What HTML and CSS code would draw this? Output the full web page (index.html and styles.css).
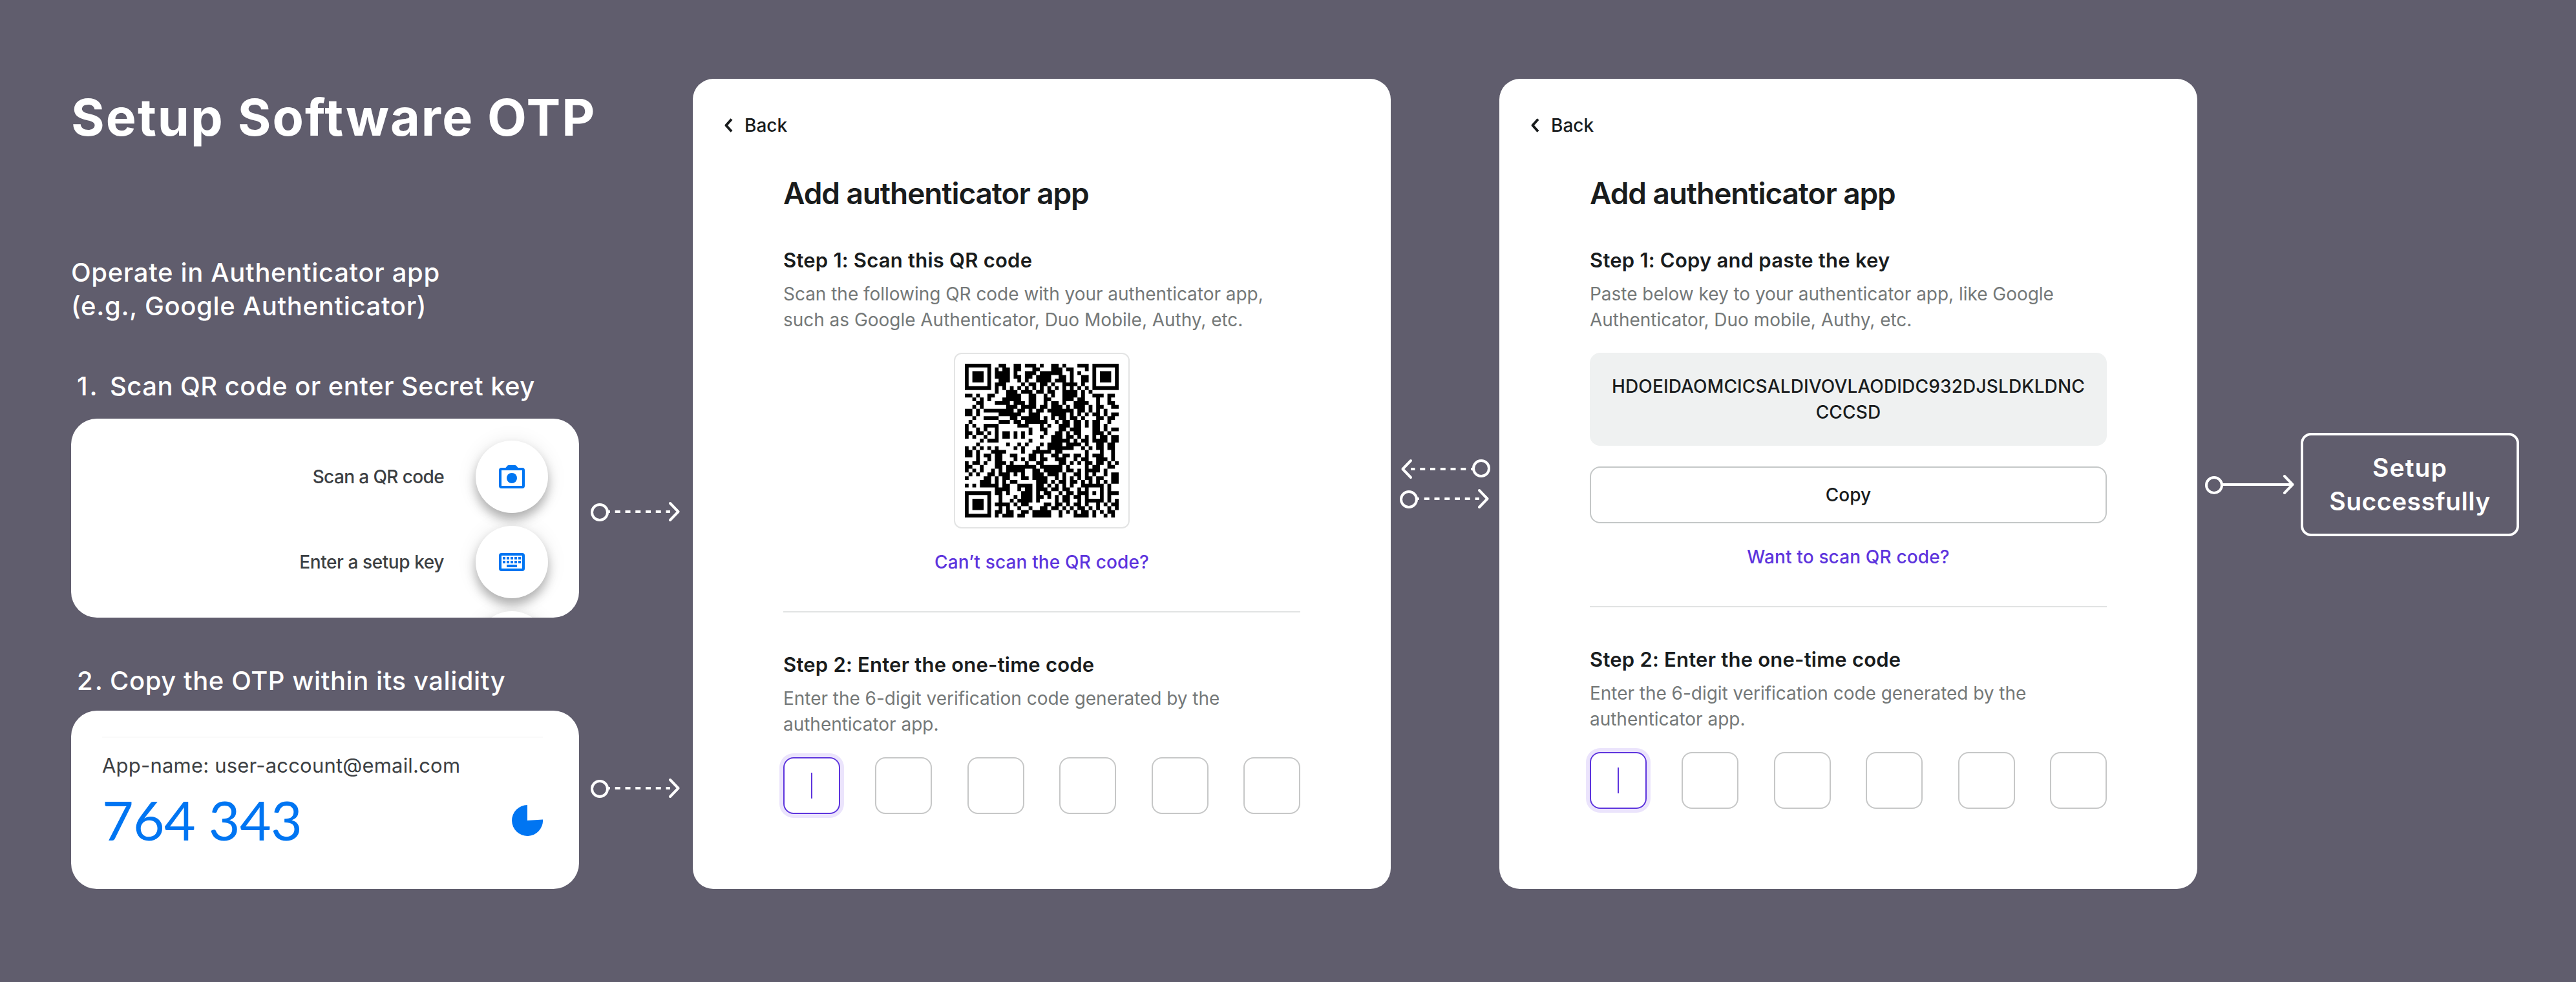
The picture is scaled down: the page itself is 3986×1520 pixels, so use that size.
FILE: index.html
```
<!DOCTYPE html>
<html lang="en">
<head>
<meta charset="utf-8">
<title>Setup Software OTP</title>
<link rel="stylesheet" href="styles.css">
</head>
<body>
<main class="flow">

  <section class="guide">
    <h1 class="guide-title">Setup Software OTP</h1>
    <p class="guide-lead">Operate in Authenticator app<br>(e.g., Google Authenticator)</p>

    <h2 class="guide-step"><span class="num">1.</span><span>Scan QR code or enter Secret key</span></h2>
    <div class="card card-actions">
      <div class="action">
        <span class="action-label">Scan a QR code</span>
        <span class="fab">
          <svg viewBox="0 0 24 24" width="48" height="48" fill="#0075f2"><path fill-rule="evenodd" d="M20 5h-3.2L15.4 3.4A1.2 1.2 0 0 0 14.5 3h-5a1.2 1.2 0 0 0-.9.4L7.2 5H4a2 2 0 0 0-2 2v12a2 2 0 0 0 2 2h16a2 2 0 0 0 2-2V7a2 2 0 0 0-2-2zm0 14H4V7h16v12z"/><circle cx="12" cy="13" r="4"/></svg>
        </span>
      </div>
      <div class="action">
        <span class="action-label action-label-key">Enter a setup key</span>
        <span class="fab">
          <svg viewBox="0 0 24 24" width="48" height="48" fill="#0075f2"><path fill-rule="evenodd" d="M4 5h16a2 2 0 0 1 2 2v10a2 2 0 0 1-2 2H4a2 2 0 0 1-2-2V7a2 2 0 0 1 2-2zm0 2v10h16V7z"/><path d="M5 8h2v2H5zM8 8h2v2H8zM11 8h2v2h-2zM14 8h2v2h-2zM17 8h2v2h-2zM5 11h2v2H5zM8 11h2v2H8zM11 11h2v2h-2zM14 11h2v2h-2zM17 11h2v2h-2zM8 14h8v2H8z"/></svg>
        </span>
      </div>
      <div class="action"><span class="fab"></span></div>
    </div>

    <h2 class="guide-step guide-step-copy"><span class="num">2.</span><span>Copy the OTP within its validity</span></h2>
    <div class="card card-code">
      <p class="account">App-name: user-account@email.com</p>
      <div class="code-row">
        <span class="code">764 343</span>
        <svg width="48" height="48" viewBox="0 0 48 48"><path fill="#0075f2" d="M24 24V0A24 24 0 1 0 48 22.4z"/></svg>
      </div>
    </div>
  </section>

  <div class="links links-guide">
    <svg class="arrow" width="138" height="32" viewBox="0 0 138 32"><circle cx="14" cy="17" r="12"/><path d="M27 16H123" stroke-dasharray="8 7.75" stroke-dashoffset="5"/><path class="tip" d="M123 3l12.500 13L123 29"/></svg>
    <svg class="arrow" width="138" height="32" viewBox="0 0 138 32"><circle cx="14" cy="17" r="12"/><path d="M27 16H123" stroke-dasharray="8 7.75" stroke-dashoffset="5"/><path class="tip" d="M123 3l12.500 13L123 29"/></svg>
  </div>

  <section class="panel">
    <a class="back"><svg width="16" height="24" viewBox="0 0 16 24"><path d="M12 2.500L3.500 12l8.500 9.500"/></svg>Back</a>
    <div class="content">
      <h2 class="panel-title">Add authenticator app</h2>
      <h3 class="step">Step 1: Scan this QR code</h3>
      <p class="desc">Scan the following QR code with your authenticator app,<br>such as Google Authenticator, Duo Mobile, Authy, etc.</p>
      <div class="qr"><svg id="qr" width="238" height="238" viewBox="0 0 41 41" shape-rendering="geometricPrecision"></svg></div>
      <a class="switch">Can’t scan the QR code?</a>
      <hr class="rule">
      <h3 class="step">Step 2: Enter the one-time code</h3>
      <p class="desc">Enter the 6-digit verification code generated by the<br>authenticator app.</p>
      <div class="otp"><i class="focus"></i><i></i><i></i><i></i><i></i><i></i></div>
    </div>
  </section>

  <div class="links links-panels">
    <svg class="arrow" width="140" height="32" viewBox="0 0 140 32"><circle cx="126" cy="15" r="12"/><path d="M113 16H17" stroke-dasharray="8 7.75" stroke-dashoffset="5"/><path class="tip" d="M17 3L4.500 16L17 29"/></svg>
    <svg class="arrow" width="140" height="32" viewBox="0 0 140 32"><circle cx="14" cy="17" r="12"/><path d="M27 16H123" stroke-dasharray="8 7.75" stroke-dashoffset="5"/><path class="tip" d="M123 3l12.500 13L123 29"/></svg>
  </div>

  <section class="panel">
    <a class="back"><svg width="16" height="24" viewBox="0 0 16 24"><path d="M12 2.500L3.500 12l8.500 9.500"/></svg>Back</a>
    <div class="content">
      <h2 class="panel-title">Add authenticator app</h2>
      <h3 class="step">Step 1: Copy and paste the key</h3>
      <p class="desc">Paste below key to your authenticator app, like Google<br>Authenticator, Duo mobile, Authy, etc.</p>
      <div class="key">HDOEIDAOMCICSALDIVOVLAODIDC932DJSLDKLDNCCCCSD</div>
      <button class="copy">Copy</button>
      <a class="switch">Want to scan QR code?</a>
      <hr class="rule">
      <h3 class="step">Step 2: Enter the one-time code</h3>
      <p class="desc">Enter the 6-digit verification code generated by the<br>authenticator app.</p>
      <div class="otp"><i class="focus"></i><i></i><i></i><i></i><i></i><i></i></div>
    </div>
  </section>

  <div class="links links-done">
    <svg class="arrow" width="140" height="32" viewBox="0 0 140 32"><circle cx="14" cy="17" r="12"/><path d="M27 16H135"/><path class="tip" d="M123 3l12.500 13L123 29"/></svg>
  </div>

  <div class="done"><span class="done-setup">Setup</span><span>Successfully</span></div>
</main>
<script src="qr.js"></script>
</body>
</html>
```
FILE: styles.css
```
* { box-sizing: border-box; margin: 0; padding: 0; }

body {
  background: #605d6d;
  font-family: Inter, "Liberation Sans", sans-serif;
  color: #191c1d;
}

.flow {
  display: flex;
  align-items: flex-start;
  width: 3986px;
  height: 1520px;
  padding: 122px 0 0 110px;
}

/* Left column: what happens in the authenticator app */
.guide { width: 786px; padding-top: 11px; color: #fff; flex: none; }
.guide-title { font-size: 79px; line-height: 96px; font-weight: 700; letter-spacing: 2.05px; white-space: nowrap; }
.guide-lead { margin-top: 167px; font-size: 40px; line-height: 52px; font-weight: 550; letter-spacing: .66px; }
.guide-step {
  display: flex;
  margin: 72px 0 24px 9px;
  font-size: 40px; line-height: 52px; font-weight: 550; letter-spacing: .46px;
}
.guide-step .num { width: 51px; letter-spacing: 3px; }
.guide-step-copy { letter-spacing: .57px; margin-bottom: 20px; }

.card { width: 786px; background: #fff; border-radius: 40px; overflow: hidden; color: #3c4043; }

.card-actions {
  display: flex; flex-direction: column; gap: 20px;
  height: 308px;
  padding: 34px 48px 0 0;
}
.action { display: flex; align-items: center; justify-content: flex-end; gap: 49px; flex: none; height: 112px; }
.action-label { font-size: 28px; line-height: 40px; font-weight: 450; letter-spacing: -.62px; }
.action-label-key { letter-spacing: -.42px; }
.fab {
  display: flex; align-items: center; justify-content: center;
  width: 112px; height: 112px;
  border-radius: 50%;
  background: #fff;
  box-shadow: 0 10px 16px rgba(0, 0, 0, .28), 0 2px 32px rgba(0, 0, 0, .09);
}

.card-code { height: 276px; padding: 40px 56px 0 48px; }
.account {
  padding-top: 23px;
  border-top: 2px solid #fafafa;
  font-size: 31px; line-height: 40px; letter-spacing: .2px;
}
.code-row { display: flex; align-items: center; justify-content: space-between; height: 96px; margin-top: 17px; }
.code { padding-bottom: 2px; font: 400 84px/96px Lato, sans-serif; letter-spacing: -.7px; color: #0075f2; }

/* Connectors between stages */
.links { display: flex; flex-direction: column; flex: none; }
.arrow { display: block; fill: none; stroke: #fff; stroke-width: 4; }
.arrow .tip { stroke-linecap: round; stroke-linejoin: round; }
.links-guide { width: 176px; padding: 654px 0 0 18px; gap: 396px; }
.links-panels { width: 168px; padding: 588px 0 0 14px; gap: 14px; }
.links-done { width: 160px; padding: 612px 0 0 12px; }

/* App panels */
.panel {
  flex: none;
  width: 1080px; height: 1254px;
  padding: 52px 48px 0;
  background: #fff;
  border-radius: 32px;
}
.back { display: flex; align-items: center; gap: 16px; height: 40px; font-size: 28px; font-weight: 500; }
.back svg { fill: none; stroke: #191c1d; stroke-width: 4; stroke-linejoin: round; }
.content { width: 800px; margin: 55px 0 0 92px; }
.panel-title { font-size: 46px; line-height: 60px; font-weight: 600; letter-spacing: -1.09px; margin-bottom: 54px; }
.step { font-size: 31px; line-height: 40px; font-weight: 600; letter-spacing: .22px; }
.desc { margin: 12px 0 31px; font-size: 28px; line-height: 40px; letter-spacing: -.03px; color: #747878; white-space: nowrap; }

.qr {
  width: 272px; height: 272px;
  margin: 0 auto;
  padding: 15px;
  border: 2px solid #e3e4e4;
  border-radius: 12px;
}
.qr svg { display: block; }

.switch {
  display: block;
  margin-top: 32px;
  text-align: center;
  font-size: 28px; line-height: 40px; font-weight: 500; letter-spacing: .15px;
  color: #5d34dd;
}
.rule { height: 2px; margin: 56px 0 61px; border: 0; background: #e1e3e3; }

.key {
  padding: 32px 30px;
  border-radius: 16px;
  background: #eff1f1;
  text-align: center;
  word-break: break-all;
  font-size: 28px; line-height: 40px; font-weight: 500; letter-spacing: .15px;
}
.copy {
  display: block;
  width: 100%; height: 88px;
  margin-top: 32px;
  border: 2px solid #c4c7c7;
  border-radius: 16px;
  background: #fff;
  color: inherit;
  font: 500 28px/40px Inter, sans-serif;
}

.otp { display: flex; justify-content: space-between; }
.otp i {
  display: flex; align-items: center; justify-content: center;
  width: 88px; height: 88px;
  border: 2px solid #c6c7c7;
  border-radius: 16px;
}
.otp .focus { border-color: #5d34dd; box-shadow: 0 0 0 6px #ebe4fc; }
.otp .focus::before { content: ""; width: 2px; height: 40px; background: #5d34dd; margin-right: 1px; }

/* Final state */
.done {
  display: flex; flex-direction: column; align-items: center; justify-content: center;
  flex: none;
  width: 338px; height: 160px;
  margin-top: 548px;
  border: 4px solid #fff;
  border-radius: 16px;
  color: #fff;
  font-size: 39px; line-height: 52px; font-weight: 600; letter-spacing: .5px;
}
.done-setup { letter-spacing: 1.1px; }
```
FILE: qr.js
```
const rows = [
  "#######..##..##.###.#..##.#...###.#######",
  "#.....#.#.##.##...##...###.##...#.#.....#",
  "#.###.#.####.#..###.######..#.#...#.###.#",
  "#.###.#.####.##.##.####..##.#..##.#.###.#",
  "#.###.#..###..#.#..####.###.#..##.#.###.#",
  "#.....#.###....#.##.##.#..####.#..#.....#",
  "#######.#.#.#.#.#.#.#.#.#.#.#.#.#.#######",
  "........#..###.###.##.##..####.#.#.......",
  "##.#..##...####..##..#.#..####.#..###.##.",
  "..#.#.#...#####..##..##...###.##...#..#..",
  "...##...####.###.##..#.##.#..####..#..##.",
  "..#.#......###.####.##.###.#.###.#.##..##",
  "##.#.########.##.#.##.#######.##.#.#.#...",
  "##.#.....######..###...####.#.#.#.##.#.##",
  "..#..####...##.#####.#.#.##.##.#...##.##.",
  ".#.......###.##.######..#.##.##.#.##..#..",
  "#.#..####.....###...#.#..###.##.#.##.#...",
  "#..#.#..#........#..##...##.###...##.#.##",
  "##.##.#.#.##.#.#.#...#..##.#.##...###.#..",
  "#.#..#..#.##.#.#....#..###.##.#.#.#.##.##",
  "....#.###........#.....#####.#.##.####.##",
  "...#.......#..#.#...#.####.####.#..##.##.",
  "#.#.#.#.#....#.#...#..#######..#.#.##.##.",
  "##.#...####....#..#####.##......#...#..#.",
  "##.#.##.##..##...##.#..##.##.##.#.###..#.",
  "...#..#.##...#.#.##.##..###..#.##..###.#.",
  "#.##.#..###.#...#..##....##.#.#.##.##.#.#",
  "##..#...##.########.######.#....#.##..##.",
  "#.#.#..#.#.#####..##.#####.##.#.####.#...",
  ".#.#..##.###.#.#..###.###.#..##.#.#..#.##",
  "#....##.#.##...##.####..#.#.#.#.##.##..##",
  "....###.#.#.##.....###.#.##.##.#.#.#.#.##",
  "#.#.#####.##..####.##.#.#.#.#..######.#..",
  "........####..#.##.###.##.##..#.#...#.#..",
  "#######.##.#...###.#.##..#.##.###.#.#.###",
  "#.....#..#...#.###.##.#.#.##.##.#...#.#..",
  "#.###.#..#..#.####.#....#.##..#.#####.#.#",
  "#.###.#.####.#.##....##.##.#.##.#..#.#.##",
  "#.###.#..#.#..#..#..##.##.#.#.##.#.#..#.#",
  "#.....#.##.##..##.#####..#.#.#.##.#.#.##.",
  "#######.#.###.##..#####..#...####.#..#.#."
];

// One path for all dark modules; each horizontal run becomes one rectangle.
let d = "";
rows.forEach((row, y) => {
  for (const run of row.matchAll(/#+/g)) {
    d += `M${run.index} ${y}h${run[0].length}v1h-${run[0].length}z`;
  }
});
const path = document.createElementNS("http://www.w3.org/2000/svg", "path");
path.setAttribute("d", d);
document.getElementById("qr").append(path);
```
